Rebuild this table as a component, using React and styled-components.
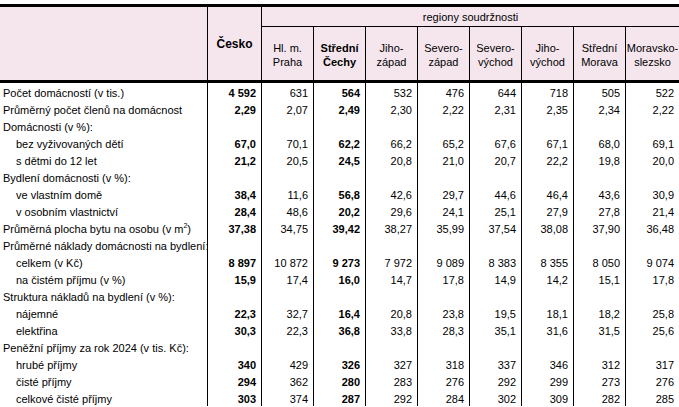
import React from 'react';
import styled, { createGlobalStyle } from 'styled-components';

const GlobalStyle = createGlobalStyle`
    html, body {
        margin: 0;
        padding: 0;
        background: #fff;
    }
`;

const Page = styled.div`
    padding-top: 4px;
    width: 679px;
`;

const Table = styled.table`
    width: 679px;
    table-layout: fixed;
    border-collapse: separate;
    border-spacing: 0;
    font-family: "Liberation Sans", Arial, sans-serif;
    font-size: 11px;
    color: #000;
`;

const HeadCell = styled.th`
    box-sizing: border-box;
    background: #f5e6ee;
    font-weight: ${(p) => (p.$bold ? 700 : 400)};
    text-align: center;
    vertical-align: middle;
    line-height: 14px;
    padding: 0;
    border-left: ${(p) => (p.$noLeft ? 'none' : '1px solid #000')};
    border-top: ${(p) => (p.$top ? '3px solid #000' : 'none')};
    border-bottom: ${(p) => (p.$thick ? '3px solid #000' : '1px solid #000')};
    font-size: ${(p) => (p.$big ? '12px' : '11px')};
`;

const GroupCell = styled(HeadCell)`
    height: 23px;
    padding-top: 1px;
`;

const SubHeadCell = styled(HeadCell)`
    height: 56px;
    padding-top: 3px;
`;

const Row = styled.tr`
    height: 17px;
`;

const Label = styled.td`
    box-sizing: border-box;
    height: 17px;
    padding: 3px 0 0 ${(p) => (p.$indent ? '16px' : '3px')};
    white-space: nowrap;
    overflow: hidden;
    line-height: 14px;
`;

const Value = styled.td`
    box-sizing: border-box;
    height: 17px;
    padding: 3px 5px 0 0;
    text-align: right;
    white-space: nowrap;
    line-height: 14px;
    border-left: 1px solid #000;
    font-weight: ${(p) => (p.$bold ? 700 : 400)};
`;

const widths = [207, 54, 52, 52, 52, 52, 52, 52, 52, 54];

const regions = [
    ['Hl. m.', 'Praha'],
    ['Střední', 'Čechy'],
    ['Jiho-', 'západ'],
    ['Severo-', 'západ'],
    ['Severo-', 'východ'],
    ['Jiho-', 'východ'],
    ['Střední', 'Morava'],
    ['Moravsko-', 'slezsko'],
];

const rows = [
    { label: 'Počet domácností (v tis.)', values: ['4 592', '631', '564', '532', '476', '644', '718', '505', '522'] },
    { label: 'Průměrný počet členů na domácnost', values: ['2,29', '2,07', '2,49', '2,30', '2,22', '2,31', '2,35', '2,34', '2,22'] },
    { label: 'Domácnosti (v %):' },
    { label: 'bez vyživovaných dětí', indent: true, values: ['67,0', '70,1', '62,2', '66,2', '65,2', '67,6', '67,1', '68,0', '69,1'] },
    { label: 's dětmi do 12 let', indent: true, values: ['21,2', '20,5', '24,5', '20,8', '21,0', '20,7', '22,2', '19,8', '20,0'] },
    { label: 'Bydlení domácnosti (v %):' },
    { label: 've vlastním domě', indent: true, values: ['38,4', '11,6', '56,8', '42,6', '29,7', '44,6', '46,4', '43,6', '30,9'] },
    { label: 'v osobním vlastnictví', indent: true, values: ['28,4', '48,6', '20,2', '29,6', '24,1', '25,1', '27,9', '27,8', '21,4'] },
    { label: 'Průměrná plocha bytu na osobu (v m', sup: '2', after: ')', values: ['37,38', '34,75', '39,42', '38,27', '35,99', '37,54', '38,08', '37,90', '36,48'] },
    { label: 'Průměrné náklady domácnosti na bydlení:' },
    { label: 'celkem (v Kč)', indent: true, values: ['8 897', '10 872', '9 273', '7 972', '9 089', '8 383', '8 355', '8 050', '9 074'] },
    { label: 'na čistém příjmu (v %)', indent: true, values: ['15,9', '17,4', '16,0', '14,7', '17,8', '14,9', '14,2', '15,1', '17,8'] },
    { label: 'Struktura nákladů na bydlení (v %):' },
    { label: 'nájemné', indent: true, values: ['22,3', '32,7', '16,4', '20,8', '23,8', '19,5', '18,1', '18,2', '25,8'] },
    { label: 'elektřina', indent: true, values: ['30,3', '22,3', '36,8', '33,8', '28,3', '35,1', '31,6', '31,5', '25,6'] },
    { label: 'Peněžní příjmy za rok 2024 (v tis. Kč):' },
    { label: 'hrubé příjmy', indent: true, values: ['340', '429', '326', '327', '318', '337', '346', '312', '317'] },
    { label: 'čisté příjmy', indent: true, values: ['294', '362', '280', '283', '276', '292', '299', '273', '276'] },
    { label: 'celkové čisté příjmy', indent: true, values: ['303', '374', '287', '292', '284', '302', '309', '282', '285'] },
];

const Sup = styled.sup`
    font-size: 7px;
    line-height: 0;
`;

// Česko and Střední Čechy are printed bold
const boldColumns = [0, 2];

const App = () => (
    <Page>
        <GlobalStyle />
        <Table>
            <colgroup>
                {widths.map((w, i) => <col key={i} style={{ width: w }} />)}
            </colgroup>
            <thead>
                <tr>
                    <HeadCell rowSpan={2} $noLeft $top $thick />
                    <HeadCell rowSpan={2} $top $thick $bold $big>Česko</HeadCell>
                    <GroupCell colSpan={8} $top>regiony soudržnosti</GroupCell>
                </tr>
                <tr>
                    {regions.map(([a, b], i) => (
                        <SubHeadCell key={i} $thick $bold={i === 1}>
                            {a}<br />{b}
                        </SubHeadCell>
                    ))}
                </tr>
            </thead>
            <tbody>
                {rows.map((r, i) => (
                    <Row key={i}>
                        <Label $indent={r.indent}>
                            {r.label}
                            {r.sup && <Sup>{r.sup}</Sup>}
                            {r.after}
                        </Label>
                        {(r.values || Array(9).fill('')).map((v, j) => (
                            <Value key={j} $bold={boldColumns.includes(j)}>
                                {v.replace(' ', '\u00a0')}
                            </Value>
                        ))}
                    </Row>
                ))}
            </tbody>
        </Table>
    </Page>
);

export default App;
